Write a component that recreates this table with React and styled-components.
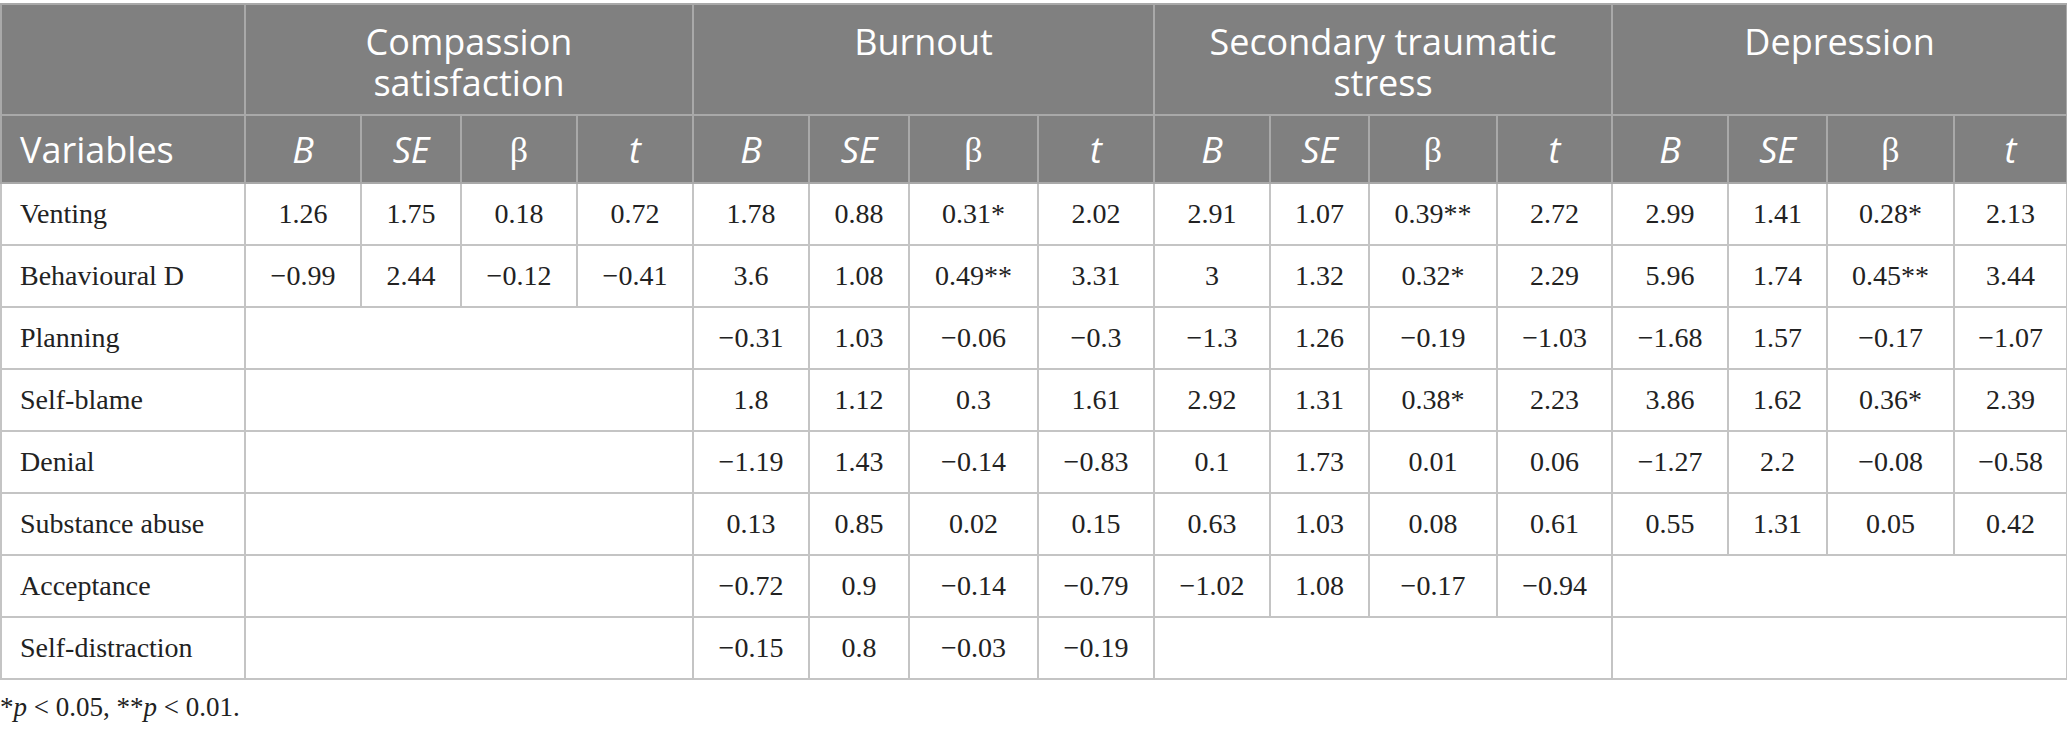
import React from 'react';
import styled, { createGlobalStyle } from 'styled-components';

const GlobalStyle = createGlobalStyle`
  body {
    margin: 0;
    background: #fff;
  }
`;

const Page = styled.div`
  width: 2067px;
  padding-top: 3px;
`;

const Table = styled.table`
  width: 2067px;
  border-collapse: collapse;
  table-layout: fixed;
  border: 2px solid #c4c4c4;
`;

const Row = styled.tr`
  height: ${p => p.$h}px;
`;

const HeadCell = styled.th`
  background: #808080;
  color: #fff;
  border: 2px solid #a9a9a9;
  font-family: "Open Sans", "Noto Sans", sans-serif;
  font-weight: 400;
  font-size: 36px;
  line-height: 41px;
  font-style: ${p => (p.$italic ? 'italic' : 'normal')};
  text-align: ${p => (p.$left ? 'left' : 'center')};
  vertical-align: ${p => (p.$top ? 'top' : 'middle')};
  padding: ${p => (p.$top ? '16px 28px 0' : p.$left ? '0 18px' : '0 4px')};
`;

const Beta = styled.span`
  font-family: "Liberation Serif", "DejaVu Serif", serif;
  font-weight: 400;
  font-size: 36px;
`;

const Cell = styled.td`
  border: 2px solid #c4c4c4;
  font-family: "Liberation Serif", "Times New Roman", serif;
  font-size: 28px;
  color: #222;
  text-align: ${p => (p.$left ? 'left' : 'center')};
  padding: ${p => (p.$left ? '0 18px' : '0 4px')};
  vertical-align: middle;
  white-space: nowrap;
`;

const Note = styled.p`
  margin: 12px 0 0;
  font-family: "Liberation Serif", "Times New Roman", serif;
  font-size: 27px;
  color: #222;
`;

const colWidths = [244, 116, 100, 116, 116, 116, 100, 129, 116, 116, 99, 128, 115, 116, 99, 127, 113];

const groups = ['Compassion satisfaction', 'Burnout', 'Secondary traumatic stress', 'Depression'];

const rows = [
  ['Venting', ['1.26', '1.75', '0.18', '0.72'], ['1.78', '0.88', '0.31*', '2.02'], ['2.91', '1.07', '0.39**', '2.72'], ['2.99', '1.41', '0.28*', '2.13']],
  ['Behavioural D', ['−0.99', '2.44', '−0.12', '−0.41'], ['3.6', '1.08', '0.49**', '3.31'], ['3', '1.32', '0.32*', '2.29'], ['5.96', '1.74', '0.45**', '3.44']],
  ['Planning', null, ['−0.31', '1.03', '−0.06', '−0.3'], ['−1.3', '1.26', '−0.19', '−1.03'], ['−1.68', '1.57', '−0.17', '−1.07']],
  ['Self-blame', null, ['1.8', '1.12', '0.3', '1.61'], ['2.92', '1.31', '0.38*', '2.23'], ['3.86', '1.62', '0.36*', '2.39']],
  ['Denial', null, ['−1.19', '1.43', '−0.14', '−0.83'], ['0.1', '1.73', '0.01', '0.06'], ['−1.27', '2.2', '−0.08', '−0.58']],
  ['Substance abuse', null, ['0.13', '0.85', '0.02', '0.15'], ['0.63', '1.03', '0.08', '0.61'], ['0.55', '1.31', '0.05', '0.42']],
  ['Acceptance', null, ['−0.72', '0.9', '−0.14', '−0.79'], ['−1.02', '1.08', '−0.17', '−0.94'], null],
  ['Self-distraction', null, ['−0.15', '0.8', '−0.03', '−0.19'], null, null],
];

function StatHeads() {
  return (
    <>
      <HeadCell $italic>B</HeadCell>
      <HeadCell $italic>SE</HeadCell>
      <HeadCell><Beta>β</Beta></HeadCell>
      <HeadCell $italic>t</HeadCell>
    </>
  );
}

export default function App() {
  return (
    <Page>
      <GlobalStyle />
      <Table>
        <colgroup>
          {colWidths.map((w, i) => <col key={i} style={{ width: w }} />)}
        </colgroup>
        <thead>
          <Row $h={111}>
            <HeadCell />
            {groups.map(g => (
              <HeadCell key={g} colSpan={4} $top>{g}</HeadCell>
            ))}
          </Row>
          <Row $h={68}>
            <HeadCell $left>Variables</HeadCell>
            {groups.map(g => <StatHeads key={g} />)}
          </Row>
        </thead>
        <tbody>
          {rows.map(([name, ...sets]) => (
            <Row key={name} $h={62}>
              <Cell $left>{name}</Cell>
              {sets.map((set, i) =>
                set
                  ? set.map((v, j) => <Cell key={`${i}-${j}`}>{v}</Cell>)
                  : <Cell key={i} colSpan={4} />
              )}
            </Row>
          ))}
        </tbody>
      </Table>
      <Note>*<i>p</i> &lt; 0.05, **<i>p</i> &lt; 0.01.</Note>
    </Page>
  );
}
